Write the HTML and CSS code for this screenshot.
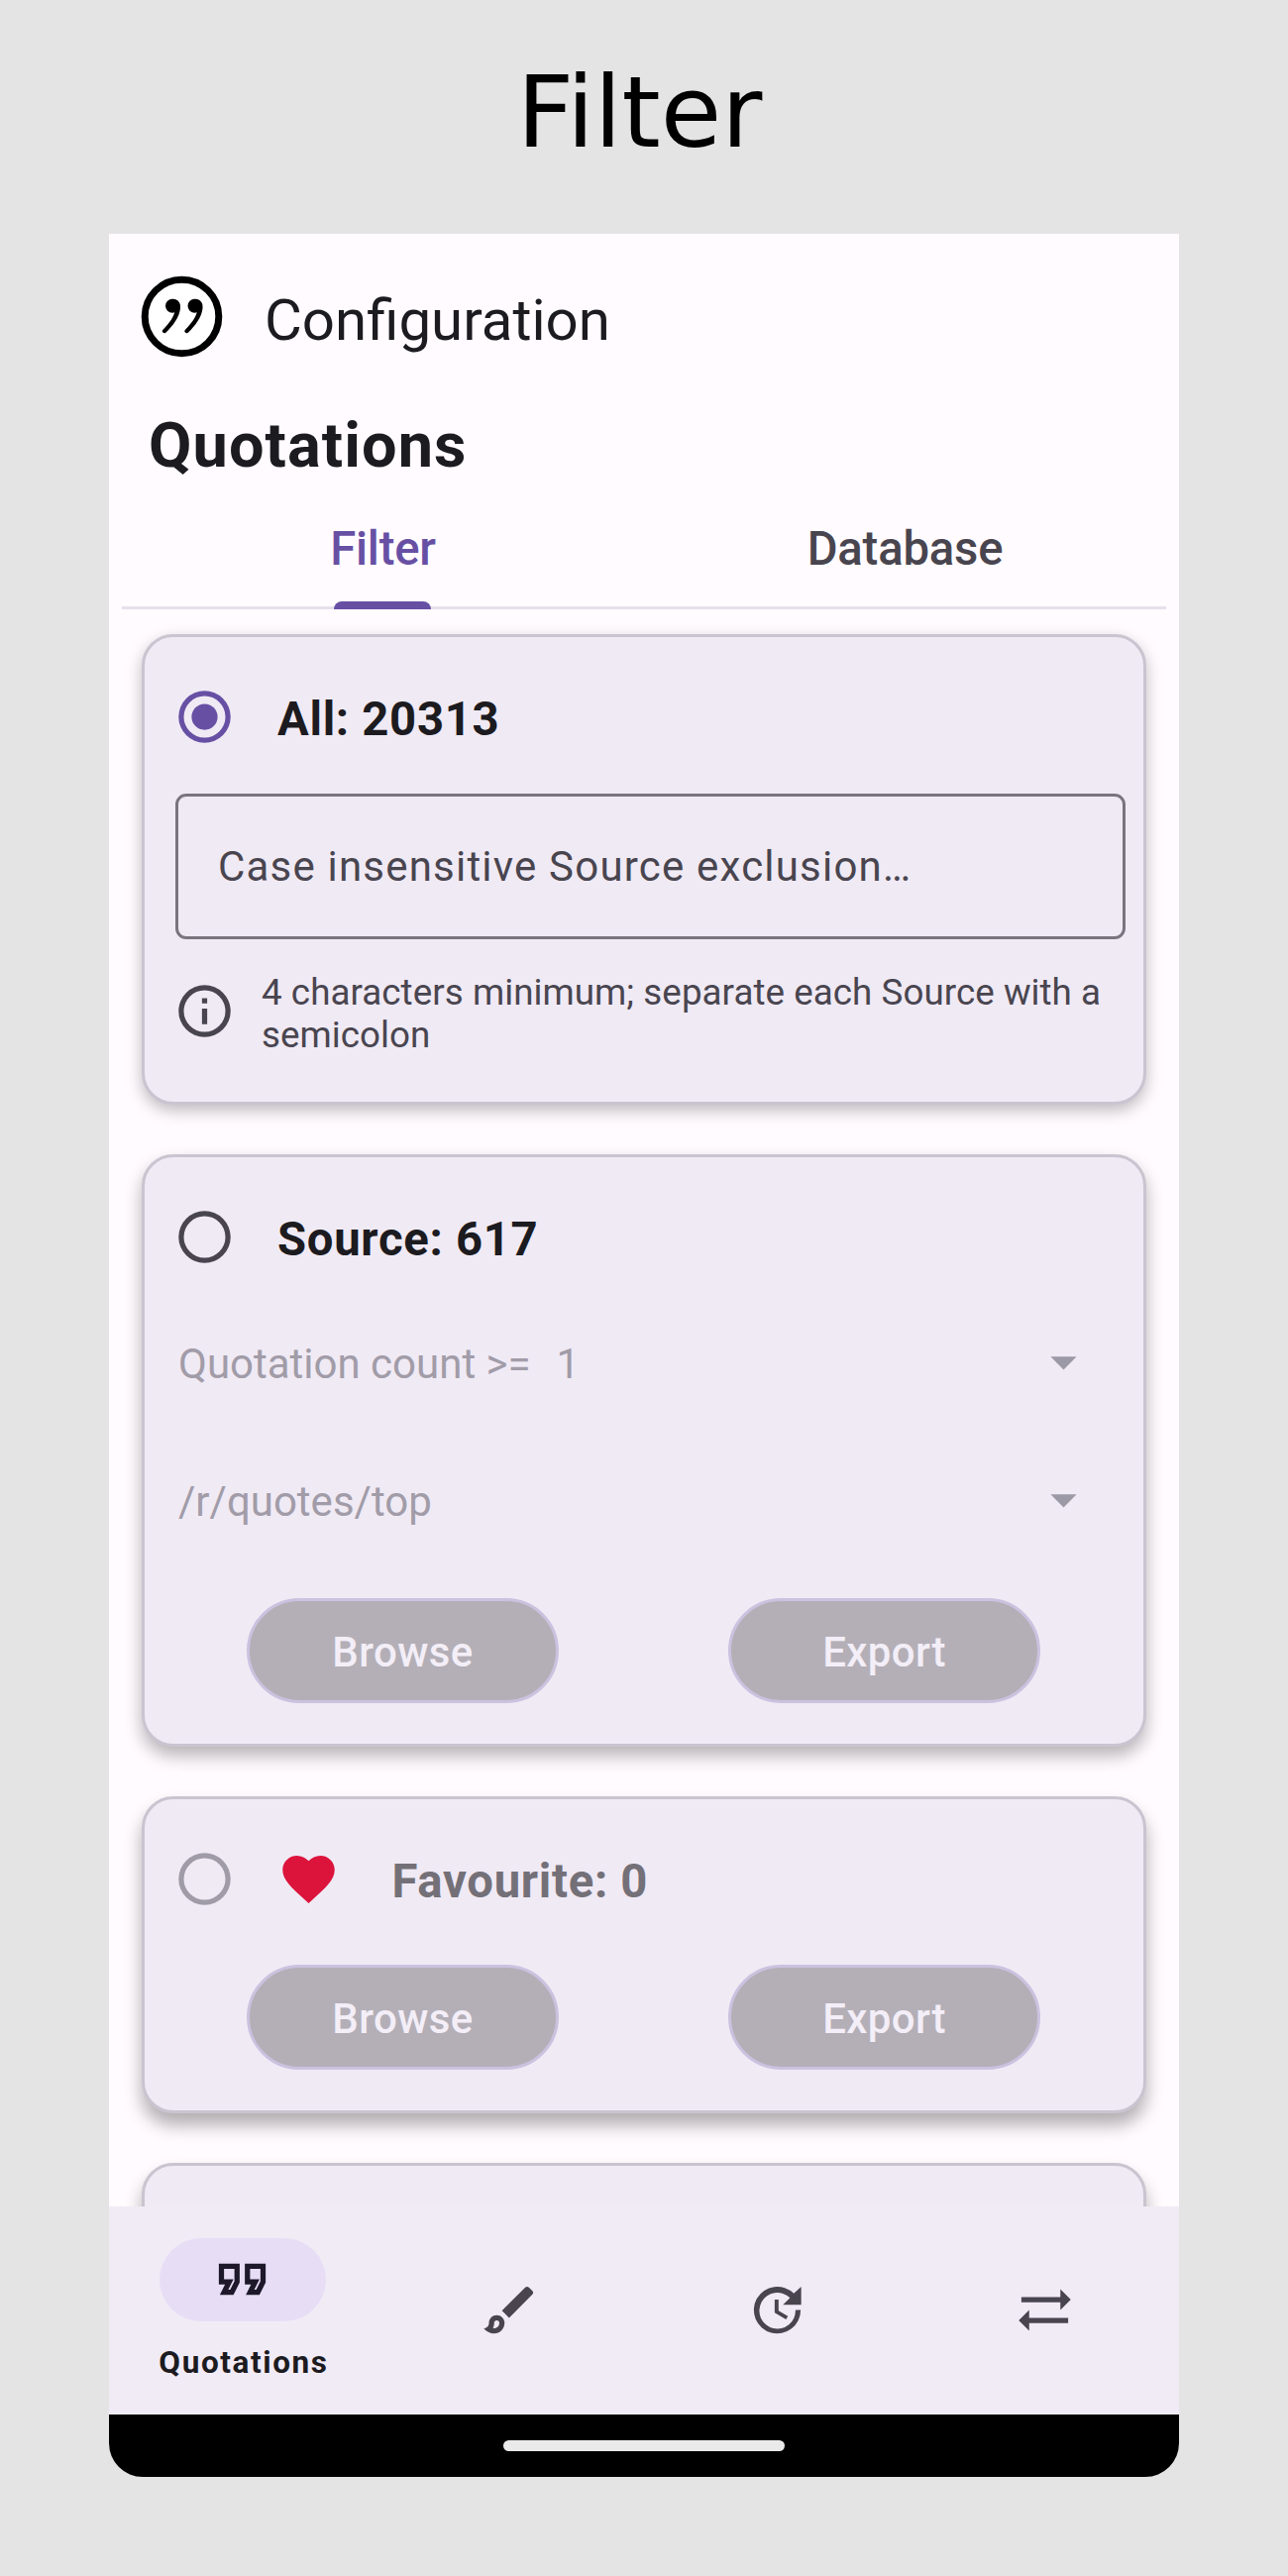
FILE: index.html
```html
<!DOCTYPE html>
<html lang="en">
<head>
<meta charset="utf-8">
<title>Filter</title>
<link rel="stylesheet" href="styles.css">
</head>
<body>
<h1 class="title">Filter</h1>
<main class="phone">
  <header class="appbar">
    <svg class="logo" viewBox="0 0 84 84"><circle cx="42.500" cy="41.500" r="37.300" fill="#fff" stroke="#000" stroke-width="7"/><g id="comma"><circle cx="33" cy="30.800" r="7"/><path d="M33 23.800c5.800 0 8.600 3.900 8 9.400-.9 9-7.600 17.800-14.700 24.500-1.800 1.500-4.500-.6-3-2.600 6.500-6.900 11.200-13.100 12.400-19.900z"/></g><use href="#comma" x="22.500"/></svg>
    <span>Configuration</span>
  </header>
  <h2 class="heading">Quotations</h2>
  <nav class="tabs">
    <a class="tab tab-active">Filter</a>
    <a class="tab">Database</a>
  </nav>
  <div class="content">
    <section class="card card-all">
      <div class="option"><svg class="icon radio-on" viewBox="0 0 24 24"><path d="M12 2a10 10 0 1 0 0 20 10 10 0 0 0 0-20zm0 18a8 8 0 1 1 0-16 8 8 0 0 1 0 16z"/><circle cx="12" cy="12" r="5"/></svg><span>All: 20313</span></div>
      <div class="field">Case insensitive Source exclusion…</div>
      <div class="hint"><svg class="icon" viewBox="0 0 24 24"><path d="M11 7h2v2h-2zm0 4h2v6h-2zm1-9a10 10 0 1 0 0 20 10 10 0 0 0 0-20zm0 18a8 8 0 1 1 0-16 8 8 0 0 1 0 16z"/></svg><p>4 characters minimum; separate each Source with a semicolon</p></div>
    </section>
    <section class="card card-source">
      <div class="option"><svg class="icon" viewBox="0 0 24 24"><path d="M12 2a10 10 0 1 0 0 20 10 10 0 0 0 0-20zm0 18a8 8 0 1 1 0-16 8 8 0 0 1 0 16z"/></svg><span>Source: 617</span></div>
      <div class="select"><span>Quotation count &gt;=</span><span class="count">1</span><svg class="icon caret" viewBox="0 0 24 24"><path d="M7 10l5 5 5-5z"/></svg></div>
      <div class="select"><span>/r/quotes/top</span><svg class="icon caret" viewBox="0 0 24 24"><path d="M7 10l5 5 5-5z"/></svg></div>
      <div class="actions"><button class="btn">Browse</button><button class="btn">Export</button></div>
    </section>
    <section class="card card-favourite">
      <div class="option disabled"><svg class="icon" viewBox="0 0 24 24"><path d="M12 2a10 10 0 1 0 0 20 10 10 0 0 0 0-20zm0 18a8 8 0 1 1 0-16 8 8 0 0 1 0 16z"/></svg><svg class="icon heart" viewBox="0 0 24 24"><path d="M12 21.350l-1.450-1.320C5.400 15.360 2 12.280 2 8.500 2 5.420 4.420 3 7.500 3c1.740 0 3.410.810 4.500 2.090C13.090 3.810 14.760 3 16.500 3 19.580 3 22 5.420 22 8.500c0 3.780-3.400 6.860-8.550 11.540L12 21.350z"/></svg><span>Favourite: 0</span></div>
      <div class="actions"><button class="btn">Browse</button><button class="btn">Export</button></div>
    </section>
    <section class="card card-next"></section>
  </div>
  <nav class="bottom">
    <a class="item item-active"><span class="pill"><svg class="icon" viewBox="0 0 24 24"><path d="M18.620 18h-5.240l2-4H13V6h8v7.240L18.620 18zm-2-2h.760L19 12.760V8h-4v4h3.620l-2 4zm-8 2H3.380l2-4H3V6h8v7.240L8.620 18zm-2-2h.760L9 12.760V8H5v4h3.620l-2 4z"/></svg></span><span class="label">Quotations</span></a>
    <a class="item"><svg class="icon" viewBox="0 0 24 24"><path d="M7 16c.550 0 1 .450 1 1 0 1.100-.900 2-2 2-.170 0-.330-.020-.500-.050.310-.550.500-1.210.500-1.950 0-.550.450-1 1-1M18.670 3c-.260 0-.510.100-.710.290L9 12.250 11.750 15l8.960-8.960c.390-.390.390-1.020 0-1.410l-1.340-1.340c-.200-.200-.450-.290-.700-.290zM7 14c-1.660 0-3 1.340-3 3 0 1.310-1.160 2-2 2 .920 1.220 2.490 2 4 2 2.210 0 4-1.790 4-4 0-1.660-1.340-3-3-3z"/></svg></a>
    <a class="item"><svg class="icon" viewBox="0 0 24 24"><path d="M21.200 3v7h-7l2.700-2.700A6.950 6.950 0 1 0 19 12h2a9 9 0 1 1-2.650-6.350zM11 8h1.500v4.300l3.600 2.100-.750 1.250L11 13z"/></svg></a>
    <a class="item"><svg class="icon" viewBox="0 0 24 24"><path d="M3 7h15V4l4 4-4 4V9H3zM21 17H6v3l-4-4 4-4v3h15z"/></svg></a>
  </nav>
  <footer class="system"><i class="handle"></i></footer>
</main>
</body>
</html>
```
FILE: styles.css
```css
* { box-sizing: border-box; }
body { margin: 0; height: 2600px; background: #e4e4e4; font-family: Roboto, sans-serif; color: #1c1b1f; overflow: hidden; }
.title { margin: 0; height: 236px; padding: 55px 9px 0 0; font: 400 100px/118px "DejaVu Sans", sans-serif; text-align: center; color: #000; }
.phone { width: 1080px; height: 2264px; margin: 0 auto; display: flex; flex-direction: column; background: #fffbff; border-radius: 0 0 34px 34px; overflow: hidden; }
.appbar { height: 168px; display: flex; align-items: center; gap: 42px; padding-left: 31px; font-size: 58.2px; }
.logo { width: 84px; height: 84px; }
.appbar span { padding-top: 6px; }
.heading { margin: 0; height: 91px; padding-left: 40px; font-size: 63px; line-height: 91px; font-weight: 700; letter-spacing: 1.1px; }
.tabs { height: 120px; margin: 0 13px; display: flex; border-bottom: 3px solid #e7e0ec; font-size: 47.25px; font-weight: 500; letter-spacing: -.2px; color: #49454f; }
.tab { flex: 1; position: relative; text-align: center; line-height: 119px; }
.tab-active { color: #6750a4; }
.tab-active::after { content: ""; position: absolute; left: 50%; bottom: -3px; width: 98px; height: 8px; margin-left: -50px; border-radius: 8px 8px 0 0; background: #6750a4; }
.content { flex: 1; min-height: 0; overflow: hidden; padding: 25px 33px 0; display: flex; flex-direction: column; }
.card { flex: none; border: 3px solid #cac4d0; border-radius: 32px; background: #f0eaf5; }
.card-all { height: 475px; margin-bottom: 50px; padding: 49px 18px 0 31px; box-shadow: 0 6px 16px rgba(0,0,0,.26); }
.card-source { height: 598px; margin-bottom: 50px; padding: 49px 18px 0 31px; box-shadow: 0 9px 17px rgba(0,0,0,.29); }
.card-favourite { height: 320px; margin-bottom: 50px; padding: 49px 18px 0 31px; box-shadow: 0 12px 18px rgba(0,0,0,.31); }
.card-next { height: 300px; box-shadow: 0 12px 18px rgba(0,0,0,.31); }
.icon { flex: none; width: 63px; height: 63px; fill: currentColor; color: #49454f; }
.option { height: 63px; margin-left: -2.5px; display: flex; align-items: center; gap: 42.5px; font-size: 47.25px; font-weight: 700; letter-spacing: .7px; }
.option span { padding-top: 4px; }
.radio-on { color: #6750a4; }
.field { width: 959px; height: 147px; margin-top: 46px; padding-left: 40px; border: 3px solid #79747e; border-radius: 11px; font-size: 42px; line-height: 141px; letter-spacing: 1.2px; color: #49454f; }
.hint { height: 86px; margin: 30px 0 0 -2.5px; display: flex; align-items: center; gap: 26.5px; font-size: 36.75px; line-height: 43px; letter-spacing: .05px; color: #49454f; }
.hint .icon { margin-bottom: 1px; }
.hint p { margin: 4px 0 0; }
.select { height: 139px; padding: 0 31px 0 3px; display: flex; align-items: center; font-size: 42px; color: #a19ca8; }
.select span { padding-top: 4px; }
.option + .select { margin-top: 25px; }
.select .count { margin-left: 26px; }
.caret { margin-left: auto; color: #9c99a6; }
.actions { display: grid; grid-template-columns: 315px 315px; gap: 171px; padding-left: 72px; }
.btn { height: 106px; padding: 3px 0 0; border: 3px solid #cac2df; border-radius: 53px; background: #b4afb7; color: #f3eef7; font: 500 42px/97px Roboto, sans-serif; letter-spacing: .4px; }
.card-source .actions { margin-top: 30px; }
.card-favourite .actions { margin-top: 55px; }
.disabled { color: #747078; }
.disabled .icon { color: #9f9ba7; }
.disabled .heart { margin-right: 10px; color: #dc143c; }
.bottom { height: 210px; display: grid; grid-template-columns: repeat(4, 1fr); background: #f1ebf6; }
.item { display: flex; align-items: center; justify-content: center; padding: 0 1px 1px 0; }
.item-active { flex-direction: column; justify-content: flex-start; padding: 32px 0 0; }
.pill { width: 168px; height: 84px; padding: 0 1px 1px 0; border-radius: 42px; display: grid; place-items: center; background: #e7def6; }
.pill .icon { color: #1d192b; }
.label { margin-top: 23px; padding-left: 2px; font-size: 31.5px; line-height: 38px; font-weight: 700; letter-spacing: 1.6px; }
.system { height: 63px; display: flex; justify-content: center; align-items: center; background: #000; }
.handle { width: 284px; height: 11px; border-radius: 6px; background: #eaeaea; }
```
